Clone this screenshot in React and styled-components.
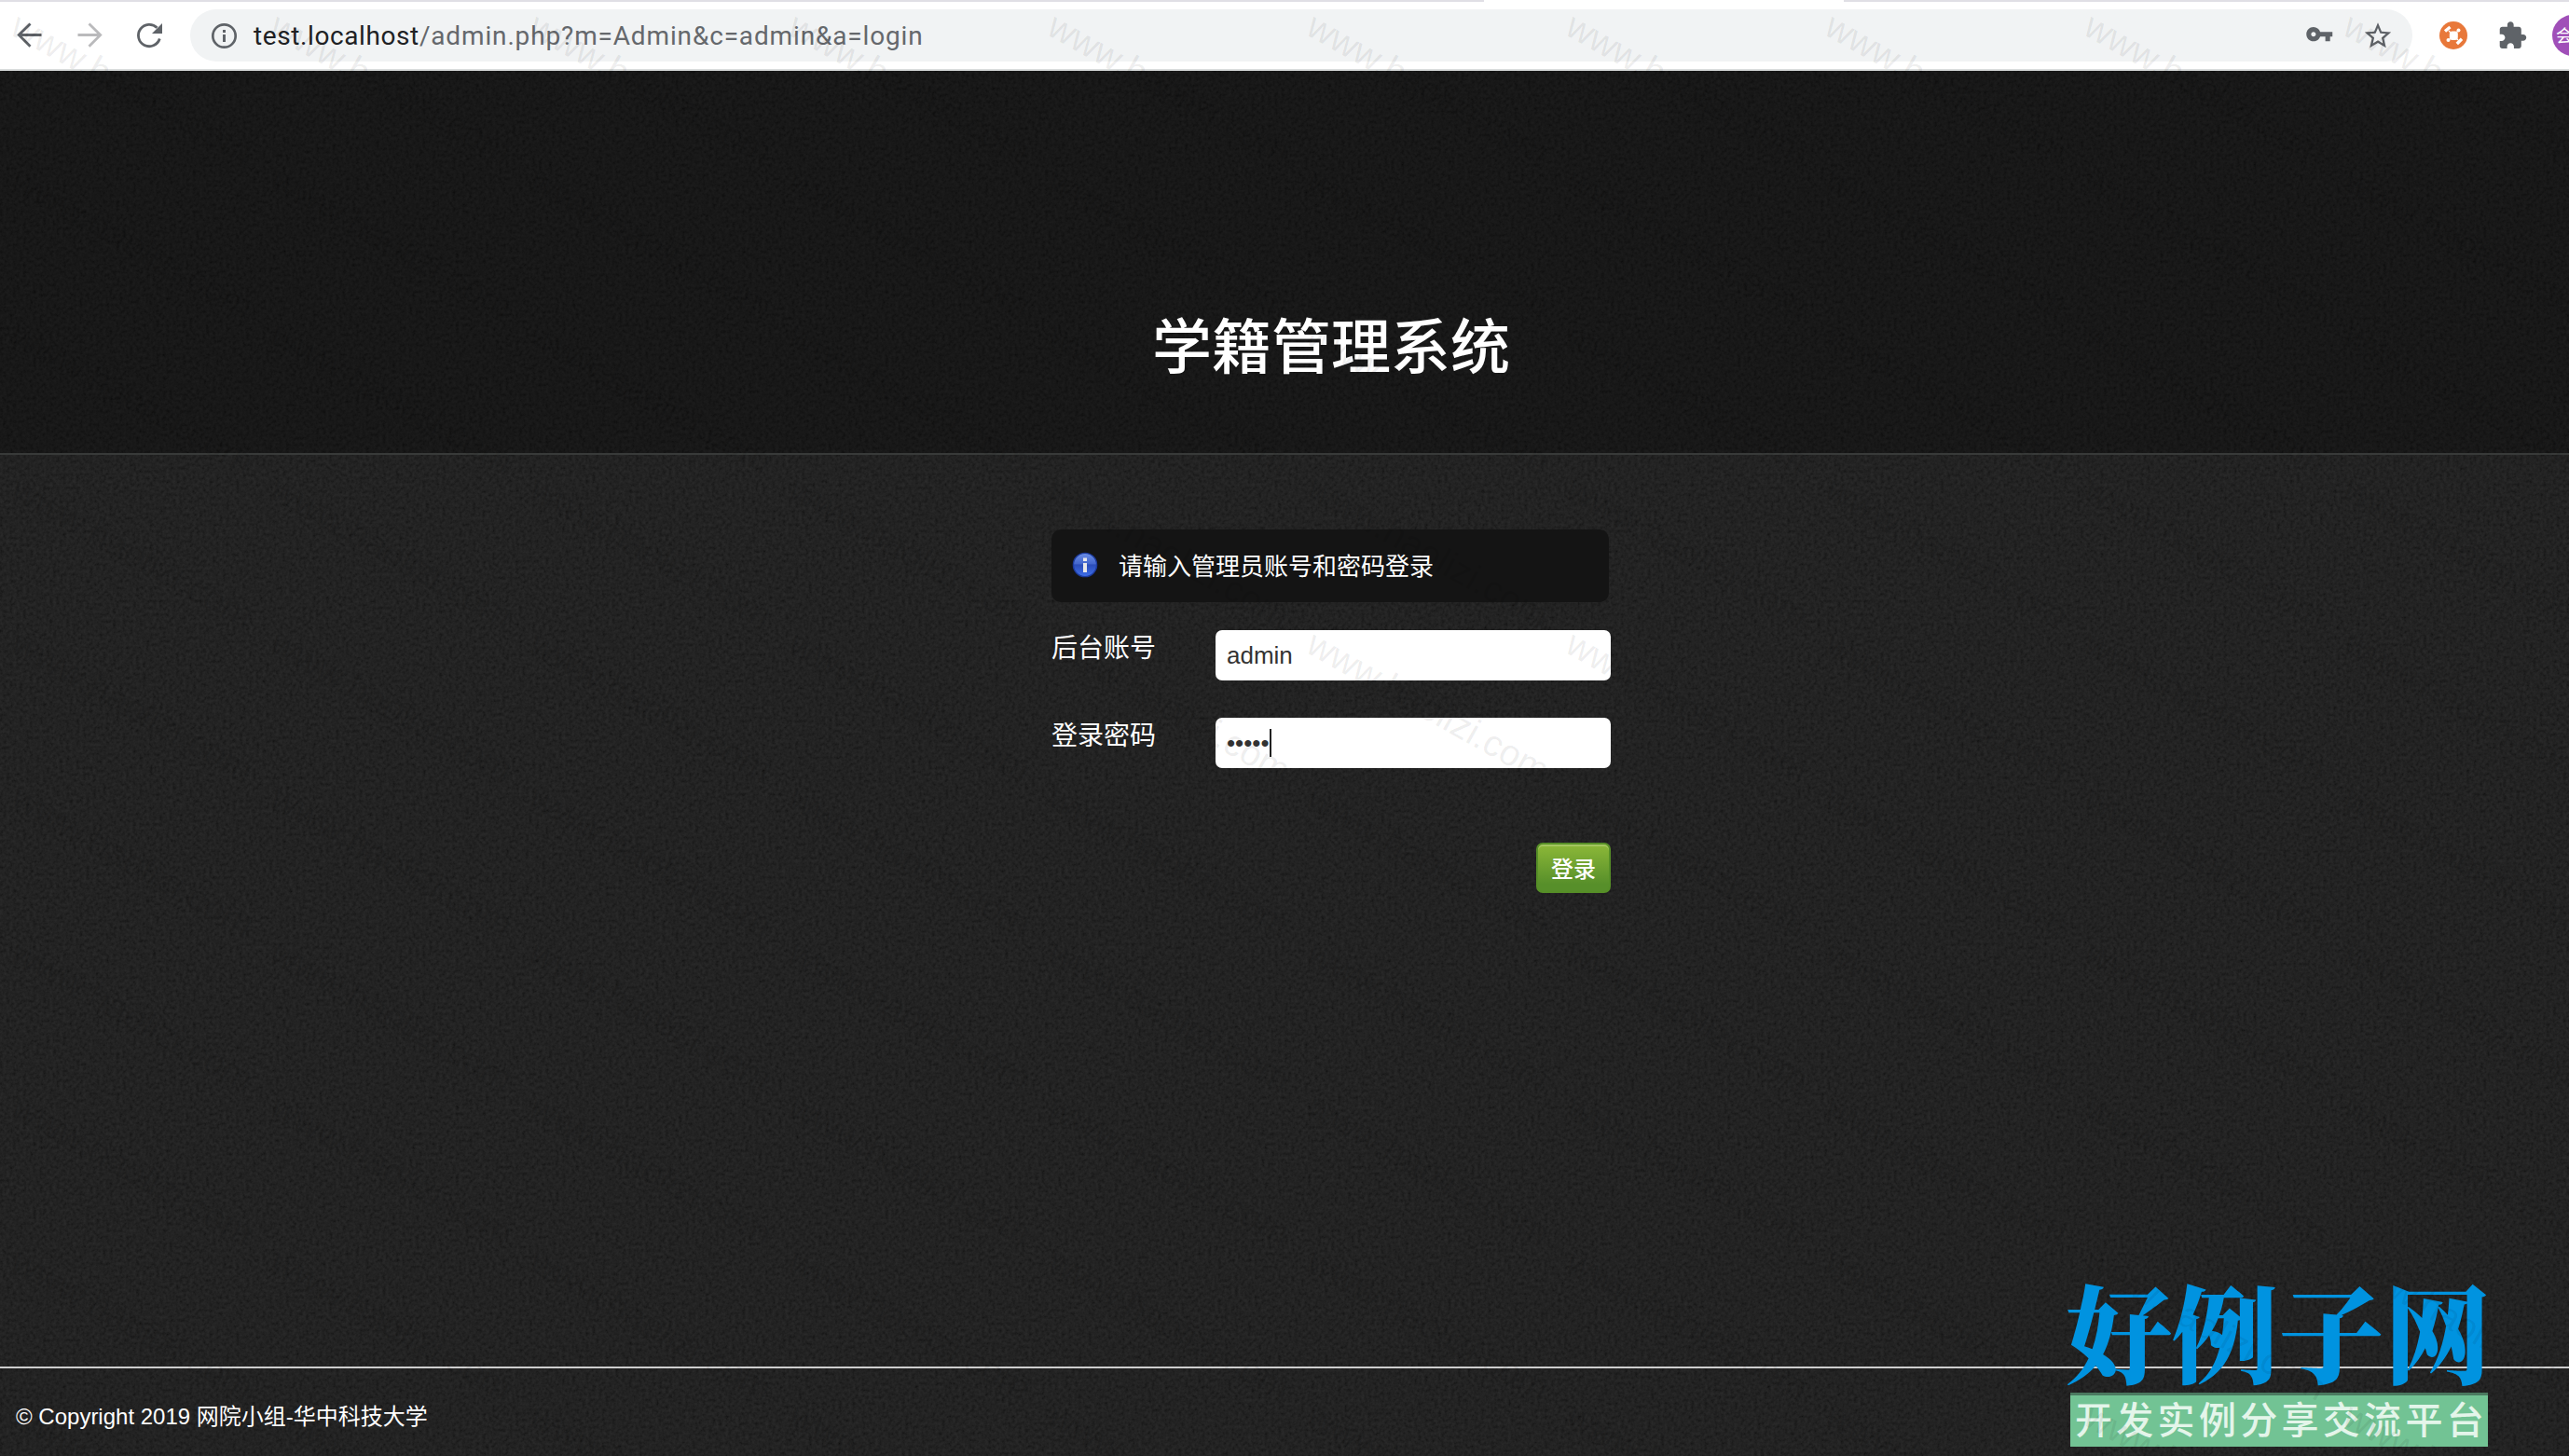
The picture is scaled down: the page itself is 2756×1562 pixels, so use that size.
import React from "react";
import styled, { createGlobalStyle } from "styled-components";

const GlobalStyle = createGlobalStyle`
  * { box-sizing: border-box; }
  html, body { margin: 0; padding: 0; background: #212121; }
  body { overflow: hidden; font-family: "Liberation Sans", "Noto Sans CJK SC", sans-serif; }
`;

const Page = styled.div`
  position: relative;
  width: 2756px;
  height: 1562px;
  overflow: hidden;
  display: flex;
  flex-direction: column;
`;

const Toolbar = styled.div`
  display: flex;
  align-items: center;
  height: 76px;
  flex: none;
  padding-left: 18px;
  overflow: hidden;
  border-top: 2px solid #e0dfe5;
  border-bottom: 2px solid #dadddd;
  background: #fff;
`;

const TabGap = styled.div`
  position: absolute;
  top: 0;
  left: 1592px;
  width: 386px;
  height: 2px;
  background: #fff;
`;

const NavIcon = styled.svg`
  flex: none;
  width: 28px;
  height: 28px;
  margin-right: 36px;
  overflow: visible;
  fill: none;
  stroke: ${(p) => (p.$muted ? "#bababc" : "#5f6368")};
  stroke-width: 2.8;
`;

const AddressBar = styled.div`
  display: flex;
  align-items: center;
  flex: none;
  width: 2384px;
  height: 56px;
  margin-left: -6px;
  padding: 0 20px 0 22px;
  border-radius: 28px;
  background: #f1f3f4;
`;

const Glyph = styled.svg`
  flex: none;
  width: ${(p) => p.$size}px;
  height: ${(p) => p.$size}px;
  margin-left: ${(p) => p.$gap || 0}px;
  fill: ${(p) => p.$color || "#5f6368"};
  overflow: visible;
`;

const Url = styled.div`
  flex: 1;
  margin-left: 18px;
  padding-top: 1px;
  font: 28px/56px Roboto, sans-serif;
  letter-spacing: 0.85px;
  color: #65686c;
  white-space: nowrap;
`;

const Host = styled.span`
  color: #202124;
  letter-spacing: 0.6px;
`;

const Avatar = styled.div`
  flex: none;
  width: 44px;
  height: 44px;
  margin-left: 26px;
  padding-left: 4px;
  border-radius: 50%;
  background: #a04fb8;
  color: #fff;
  font: 18px/43px "Noto Sans CJK SC", sans-serif;
`;

const Site = styled.div`
  position: relative;
  flex: 1;
  display: flex;
  flex-direction: column;
  background: #212121;
  color: #fff;
`;

const Texture = styled.svg`
  position: absolute;
  inset: 0;
  width: 100%;
  height: 100%;
`;

const Banner = styled.header`
  position: relative;
  display: flex;
  justify-content: center;
  align-items: flex-end;
  height: 412px;
  padding: 0 0 71px 100px;
  background: rgba(0, 0, 0, 0.3);
  border-bottom: 2px solid #383a39;
`;

const Title = styled.h1`
  margin: 0;
  font: 500 64px/96px "Noto Sans CJK SC", sans-serif;
`;

const Main = styled.main`
  position: relative;
  flex: 1;
  padding: 80px 0 0 1128px;
`;

const Form = styled.form`
  display: flex;
  flex-direction: column;
  width: 600px;
`;

const Notice = styled.div`
  display: flex;
  align-items: center;
  width: 598px;
  height: 78px;
  margin-bottom: 30px;
  padding-left: 21px;
  border-radius: 10px;
  background: #141414;
  font-size: 26px;
  line-height: 78px;
`;

const NoticeText = styled.span`
  margin-left: 21px;
  padding-top: 1px;
`;

const Row = styled.div`
  display: flex;
  justify-content: space-between;
  height: 54px;
  margin-bottom: 40px;
`;

const Label = styled.label`
  font-size: 28px;
  line-height: 40px;
`;

const Field = styled.div`
  display: flex;
  align-items: center;
  width: 424px;
  height: 54px;
  padding-left: 12px;
  border-radius: 7px;
  background: #fff;
  color: #333;
  font: 26px/54px "Liberation Sans", sans-serif;
`;

const Caret = styled.span`
  width: 2px;
  height: 30px;
  background: #222;
`;

const Submit = styled.button`
  align-self: flex-end;
  width: 80px;
  height: 54px;
  margin-top: 40px;
  padding: 0;
  border: 2px solid #568f27;
  border-radius: 7px;
  background: linear-gradient(#8cb838, #578f2a 85%);
  box-shadow: inset 0 2px 0 #a3c65f;
  color: #fff;
  font: 500 24px/48px "Noto Sans CJK SC", sans-serif;
`;

const Footer = styled.footer`
  position: relative;
  height: 96px;
  padding: 31px 0 0 17px;
  border-top: 2px solid #cdcdcd;
  font-size: 24px;
  line-height: 42px;
`;

const Stamp = styled.div`
  position: absolute;
  left: 2216px;
  top: 1367px;
  width: 470px;
`;

const StampName = styled.div`
  height: 127px;
  color: #0093e0;
  font: 900 114px/118px "Noto Serif CJK SC", "Noto Sans CJK SC", sans-serif;
  white-space: nowrap;
`;

const StampLine = styled.div`
  width: 448px;
  height: 58px;
  margin-left: 5px;
  padding-left: 5px;
  border-top: 3px solid #4b7a60;
  background: #72c394;
  color: #e4f5ea;
  font: 500 40px/48px "Noto Sans CJK SC", sans-serif;
  letter-spacing: 4.3px;
  white-space: nowrap;
`;

const Watermark = styled.svg`
  position: absolute;
  inset: 0;
  width: 2756px;
  height: 1562px;
  pointer-events: none;
  font: 39.3px "Liberation Sans", sans-serif;
  fill: #000;
  fill-opacity: 0.075;
`;

const columns = Array.from({ length: 10 }, (_, i) => i);
const rows = Array.from({ length: 10 }, (_, i) => i);

export default function App() {
  return (
    <Page>
      <GlobalStyle />
      <Toolbar>
        <NavIcon viewBox="0 0 28 28">
          <path d="M26.5 13.5H3M14.5 1.5L2.3 13.5L14.5 25.7" />
        </NavIcon>
        <NavIcon $muted viewBox="0 0 28 28">
          <path d="M1.5 13.5H25M13.5 1.5L25.7 13.5L13.5 25.7" />
        </NavIcon>
        <NavIcon viewBox="0 0 28 28">
          <path d="M25.3 17.5A11.7 11.7 0 1 1 22.5 5.8" />
          <path d="M28 1V12H17Z" fill="#5f6368" stroke="none" />
        </NavIcon>
        <AddressBar>
          <Glyph $size={28} viewBox="0 0 28 28">
            <circle cx="14.5" cy="14.5" r="12.2" fill="none" stroke="#5f6368" strokeWidth="2.7" />
            <path d="M13 13h3v8h-3zM13 8h3v3h-3z" />
          </Glyph>
          <Url>
            <Host>test.localhost</Host>/admin.php?m=Admin&amp;c=admin&amp;a=login
          </Url>
          <Glyph $size={30.5} viewBox="0 1.2 24 24">
            <path d="M12.65 10C11.83 7.67 9.61 6 7 6c-3.31 0-6 2.69-6 6s2.69 6 6 6c2.61 0 4.83-1.67 5.65-4H17v4h4v-4h2v-4H12.65zM7 14c-1.1 0-2-.9-2-2s.9-2 2-2 2 .9 2 2-.9 2-2 2z" />
          </Glyph>
          <Glyph $size={34} $gap={31} viewBox="0 -.3 24 24">
            <path d="M22 9.24l-7.19-.62L12 2 9.19 8.63 2 9.24l5.46 4.73L5.82 21 12 17.27 18.18 21l-1.63-7.03L22 9.24zM12 15.4l-3.76 2.27 1-4.28-3.32-2.88 4.38-.38L12 6.1l1.71 4.04 4.38.38-3.32 2.88 1 4.28L12 15.4z" />
          </Glyph>
        </AddressBar>
        <Glyph $size={30} $gap={29} viewBox="0 0 30 30">
          <circle cx="15" cy="15" r="15" fill="#e8783a" />
          <g stroke="#fff" strokeWidth="1.2">
            <path d="M10 10L20 20M20 10L10 20" />
          </g>
          <g fill="#fff">
            <rect x="10.8" y="10.5" width="9" height="9.5" rx="3" />
            <circle cx="20.5" cy="9.5" r="2" />
            <circle cx="9.5" cy="20" r="2" />
          </g>
          <g stroke="#fff" strokeWidth="3.4">
            <path d="M6 10.5L11.5 6M18.8 24L24 18.8" />
          </g>
        </Glyph>
        <Glyph $size={32.6} $gap={32.3} viewBox="0 0 24 24">
          <path d="M20.5 11H19V7c0-1.1-.9-2-2-2h-4V3.5C13 2.12 11.88 1 10.5 1S8 2.12 8 3.5V5H4c-1.1 0-1.99.9-1.99 2v3.8H3.5c1.49 0 2.7 1.21 2.7 2.7s-1.21 2.7-2.7 2.7H2V20c0 1.1.9 2 2 2h3.8v-1.5c0-1.49 1.21-2.7 2.7-2.7 1.49 0 2.7 1.21 2.7 2.7V22H17c1.1 0 2-.9 2-2v-4h1.5c1.38 0 2.5-1.12 2.5-2.5S21.88 11 20.5 11z" />
        </Glyph>
        <Avatar>会</Avatar>
      </Toolbar>
      <TabGap />
      <Site>
        <Texture aria-hidden="true">
          <filter id="grain" x="0" y="0" width="100%" height="100%">
            <feTurbulence type="fractalNoise" baseFrequency="0.28" numOctaves="3" seed="4" />
            <feColorMatrix values="0.14 0 0 0 0.032  0.14 0 0 0 0.032  0.14 0 0 0 0.032  0 0 0 0 1" colorInterpolationFilters="sRGB" />
          </filter>
          <rect width="100%" height="100%" filter="url(#grain)" />
        </Texture>
        <Banner>
          <Title>学籍管理系统</Title>
        </Banner>
        <Main>
          <Form>
            <Notice>
              <Glyph $size={30} viewBox="0 0 30 30">
                <defs>
                  <linearGradient id="ball" x1="0" y1="0" x2="0" y2="1">
                    <stop offset="0" stopColor="#6d8fe6" />
                    <stop offset=".45" stopColor="#4467cd" />
                    <stop offset=".5" stopColor="#2b4cb8" />
                    <stop offset="1" stopColor="#3f70ea" />
                  </linearGradient>
                </defs>
                <circle cx="15" cy="14" r="12.6" fill="url(#ball)" stroke="#1c3a9c" strokeWidth="1.4" />
                <path d="M13 6.5h4v3.5h-4zM13 12h4v10h-4z" fill="#e8e8ea" />
              </Glyph>
              <NoticeText>请输入管理员账号和密码登录</NoticeText>
            </Notice>
            <Row>
              <Label>后台账号</Label>
              <Field>admin</Field>
            </Row>
            <Row>
              <Label>登录密码</Label>
              <Field>
                •••••
                <Caret />
              </Field>
            </Row>
            <Submit type="button">登录</Submit>
          </Form>
        </Main>
        <Footer>© Copyright 2019 网院小组-华中科技大学</Footer>
      </Site>
      <Stamp>
        <StampName>好例子网</StampName>
        <StampLine>开发实例分享交流平台</StampLine>
      </Stamp>
      <Watermark aria-hidden="true">
        {rows.map((r) =>
          columns.map((c) => (
            <text
              key={`${r}:${c}`}
              transform={`translate(${9 + c * 278} ${36 + r * 165.7}) rotate(29.3)`}
            >
              www.haolizi.com
            </text>
          ))
        )}
      </Watermark>
    </Page>
  );
}
